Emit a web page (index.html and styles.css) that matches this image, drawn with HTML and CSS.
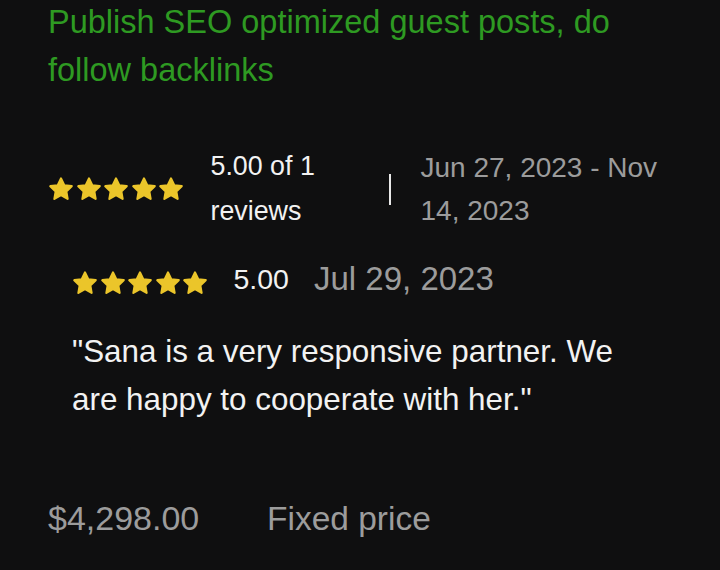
FILE: index.html
```html
<!DOCTYPE html>
<html>
<head>
<meta charset="utf-8">
<link rel="stylesheet" href="styles.css">
</head>
<body>
<svg width="0" height="0" class="defs">
  <defs>
    <symbol id="star" viewBox="0 0 24 24">
      <path d="M12 2.2l3 6.3 6.9.9-5 4.8 1.2 6.9L12 17.7l-6.1 3.4 1.2-6.9-5-4.8 6.9-.9z" fill="#ebc52a" stroke="#ebc52a" stroke-width="2" stroke-linejoin="round"/>
    </symbol>
  </defs>
</svg>
<main class="job">
  <h1 class="title">Publish SEO optimized guest posts, do follow backlinks</h1>
  <div class="summary">
    <div class="stars stars-lg">
      <svg><use href="#star"/></svg><svg><use href="#star"/></svg><svg><use href="#star"/></svg><svg><use href="#star"/></svg><svg><use href="#star"/></svg>
    </div>
    <div class="score">5.00 of 1 reviews</div>
    <div class="divider"></div>
    <div class="range">Jun 27, 2023 - Nov 14, 2023</div>
  </div>
  <div class="review">
    <div class="review-head">
      <div class="stars stars-sm">
        <svg><use href="#star"/></svg><svg><use href="#star"/></svg><svg><use href="#star"/></svg><svg><use href="#star"/></svg><svg><use href="#star"/></svg>
      </div>
      <span class="rscore">5.00</span>
      <span class="rdate">Jul 29, 2023</span>
    </div>
    <p class="quote">"Sana is a very responsive partner. We are happy to cooperate with her."</p>
  </div>
  <div class="price-row">
    <span class="price">$4,298.00</span>
    <span class="ptype">Fixed price</span>
  </div>
</main>
</body>
</html>
```
FILE: styles.css
```css
html, body {
  margin: 0;
  padding: 0;
  background: #0f0f10;
}
body {
  width: 720px;
  height: 570px;
  overflow: hidden;
  font-family: "Liberation Sans", Arial, sans-serif;
}
.defs { position: absolute; }
.job {
  padding: 0 0 0 48px;
}
.title {
  margin: -2px 0 0;
  font-weight: 400;
  font-size: 32.5px;
  line-height: 48px;
  color: #2e9a22;
  width: 600px;
}
.summary {
  display: flex;
  align-items: center;
  margin-top: 50px;
}
.stars { display: flex; }
.stars svg { display: block; }
.stars-lg svg { width: 26px; height: 26px; margin-right: 1.5px; }
.score {
  width: 130px;
  margin-left: 25px;
  font-size: 26.8px;
  line-height: 45px;
  color: #f2f2f2;
}
.divider {
  width: 2px;
  height: 31px;
  background: #e8e8e8;
  margin-left: 48px;
}
.range {
  width: 270px;
  margin-left: 30px;
  font-size: 28px;
  line-height: 43px;
  color: #9c9c9c;
}
.review {
  padding-left: 24px;
  margin-top: 26px;
}
.review-head {
  display: flex;
  align-items: center;
}
.stars-sm { padding-top: 8px; }
.stars-sm svg { width: 26px; height: 26px; margin-right: 1.5px; }
.rscore {
  margin-left: 24px;
  font-size: 28.5px;
  color: #f2f2f2;
}
.rdate {
  margin-left: 25px;
  font-size: 33px;
  color: #9c9c9c;
}
.quote {
  margin: 30px 0 0;
  font-size: 31.4px;
  line-height: 48px;
  color: #f2f2f2;
  width: 560px;
}
.price-row {
  display: flex;
  align-items: baseline;
  margin-top: 75px;
  color: #9c9c9c;
}
.price { width: 219px; font-size: 34px; }
.ptype { font-size: 33.5px; }
```
